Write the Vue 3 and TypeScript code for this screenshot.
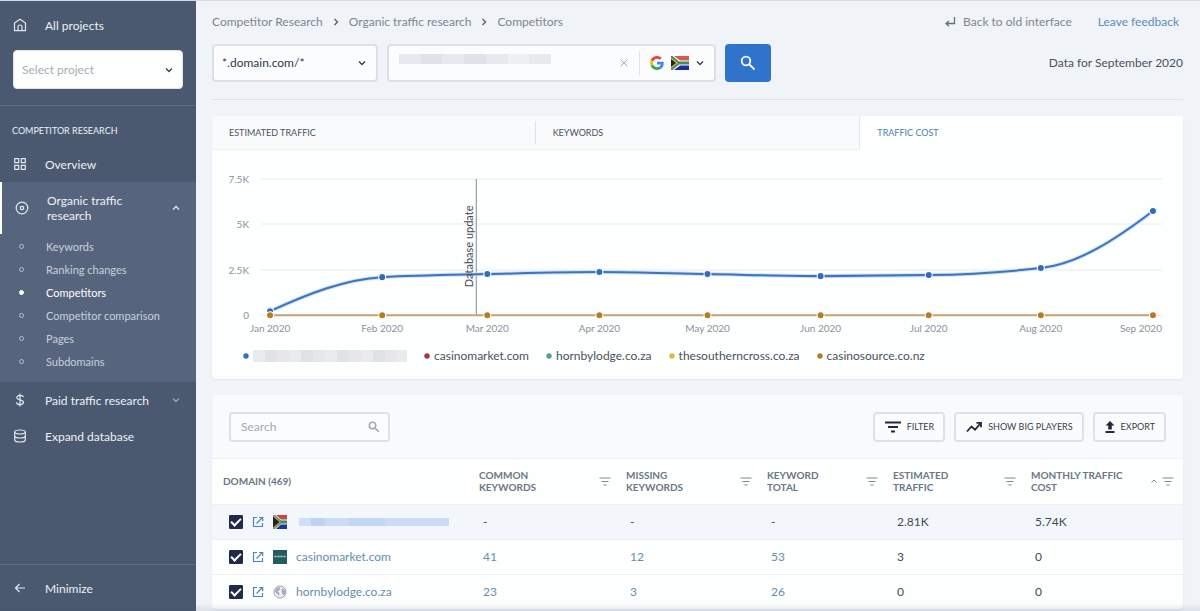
<script setup lang="ts">
import { ref } from 'vue'

interface Row {
  name: string
  icon: 'flag' | 'market' | 'globe'
  common: string
  missing: string
  total: string
  traffic: string
  cost: string
  own?: boolean
}

const subItems = ['Keywords', 'Ranking changes', 'Competitors', 'Competitor comparison', 'Pages', 'Subdomains']
const crumbs = ['Competitor Research', 'Organic traffic research', 'Competitors']
const tabs = ['Estimated traffic', 'Keywords', 'Traffic cost']
const activeTab = ref('Traffic cost')
const query = ref('')
const tableSearch = ref('')

const months = [
  { label: 'Jan 2020', x: 58, value: 230 },
  { label: 'Feb 2020', x: 170, value: 2080 },
  { label: 'Mar 2020', x: 275, value: 2270 },
  { label: 'Apr 2020', x: 387, value: 2350 },
  { label: 'May 2020', x: 495, value: 2250 },
  { label: 'Jun 2020', x: 608, value: 2160 },
  { label: 'Jul 2020', x: 716, value: 2210 },
  { label: 'Aug 2020', x: 828, value: 2570 },
  { label: 'Sep 2020', x: 940, value: 5740 },
]
const grid = [
  { label: '7.5K', value: 7500 },
  { label: '5K', value: 5000 },
  { label: '2.5K', value: 2500 },
  { label: '0', value: 0 },
]
const yOf = (value: number): number => Math.round(165 - (value / 7500) * 136)

// Smooth curve through the points that never overshoots a local peak.
function curve(points: { x: number; y: number }[]): string {
  const slopes = points.slice(1).map((p, i) => (p.y - points[i].y) / (p.x - points[i].x))
  const tangents = points.map((_, i) => {
    if (i === 0) return slopes[0] * 1.5
    if (i === points.length - 1) return slopes[i - 1] * 1.5
    const a = slopes[i - 1]
    const b = slopes[i]
    return a * b <= 0 ? 0 : (2 * a * b) / (a + b)
  })
  let d = `M${points[0].x},${points[0].y}`
  for (let i = 1; i < points.length; i++) {
    const a = points[i - 1]
    const b = points[i]
    const h = (b.x - a.x) / 3
    d += ` C${a.x + h},${a.y + tangents[i - 1] * h} ${b.x - h},${b.y - tangents[i] * h} ${b.x},${b.y}`
  }
  return d
}
const linePath = curve(months.map((m) => ({ x: m.x, y: yOf(m.value) })))

const legend = [
  { name: '', color: '#2f6fc9' },
  { name: 'casinomarket.com', color: '#b5303c' },
  { name: 'hornbylodge.co.za', color: '#55a383' },
  { name: 'thesoutherncross.co.za', color: '#dfb93f' },
  { name: 'casinosource.co.nz', color: '#bb7a22' },
]

const columns = ['Common keywords', 'Missing keywords', 'Keyword total', 'Estimated traffic', 'Monthly traffic cost']
const rows: Row[] = [
  { name: '', icon: 'flag', common: '-', missing: '-', total: '-', traffic: '2.81K', cost: '5.74K', own: true },
  { name: 'casinomarket.com', icon: 'market', common: '41', missing: '12', total: '53', traffic: '3', cost: '0' },
  { name: 'hornbylodge.co.za', icon: 'globe', common: '23', missing: '3', total: '26', traffic: '0', cost: '0' },
]
</script>

<template>
  <div class="app">
    <aside class="sidebar">
      <a href="#" class="nav home">
        <svg class="ico" viewBox="0 0 14 14"><path d="M1.500 5 7 1.300 12.500 5v7.700h-11zM5 12.500V8.500q0-1.500 2-1.500t2 1.500v4" /></svg>
        <span>All projects</span>
      </a>
      <div class="project">
        <select aria-label="Select project"><option>Select project</option></select>
        <svg class="chev" viewBox="0 0 8 8"><path d="M1 2.500 4 5.500 7 2.500" /></svg>
      </div>
      <div class="section">COMPETITOR RESEARCH</div>
      <a href="#" class="nav">
        <svg class="ico" viewBox="0 0 14 14"><path d="M1.700 1.700h4v4h-4zM8.300 1.700h4v4h-4zM1.700 8.300h4v4h-4zM8.300 8.300h4v4h-4z" /></svg>
        <span>Overview</span>
      </a>
      <div class="group">
        <a href="#" class="nav organic">
          <svg class="ico" viewBox="0 0 14 14"><circle cx="7" cy="7" r="5.800" /><circle cx="7" cy="7" r="1.700" /></svg>
          <span>Organic traffic<br />research</span>
          <svg class="chev" viewBox="0 0 8 8"><path d="M1 5.500 4 2.500 7 5.500" /></svg>
        </a>
        <ul class="subs">
          <li v-for="s in subItems" :key="s">
            <a href="#" :class="{ on: s === 'Competitors' }"><i></i>{{ s }}</a>
          </li>
        </ul>
      </div>
      <a href="#" class="nav">
        <svg class="ico" viewBox="0 0 14 14"><path d="M7 .5v13M10.300 4.200C10 2.800 8.800 2.400 7 2.400c-2 0-3.200.8-3.200 2.200C3.800 7.500 10.400 6.200 10.400 9.300c0 1.500-1.400 2.300-3.400 2.300s-3.300-.8-3.500-2.300" /></svg>
        <span>Paid traffic research</span>
        <svg class="chev dim" viewBox="0 0 8 8"><path d="M1 2.500 4 5.500 7 2.500" /></svg>
      </a>
      <a href="#" class="nav">
        <svg class="ico" viewBox="0 0 14 14"><ellipse cx="7" cy="3" rx="5.300" ry="2" /><path d="M1.700 3v8c0 1.200 2.300 2 5.300 2s5.300-.8 5.300-2V3M1.700 7c0 1.200 2.300 2 5.300 2s5.300-.8 5.300-2" /></svg>
        <span>Expand database</span>
      </a>
      <button type="button" class="nav minimize">
        <svg class="ico" viewBox="0 0 14 14"><path d="M12 7H2.500M6.500 3l-4 4 4 4" /></svg>
        <span>Minimize</span>
      </button>
    </aside>

    <main class="main">
      <header class="top">
        <nav class="crumbs" aria-label="Breadcrumb">
          <template v-for="(c, i) in crumbs" :key="c">
            <svg v-if="i" class="sep" viewBox="0 0 8 8"><path d="M2.500 1 5.500 4 2.500 7" /></svg>
            <a href="#">{{ c }}</a>
          </template>
        </nav>
        <div class="toplinks">
          <a href="#" class="back">
            <svg viewBox="0 0 12 12"><path d="M10.500 1V7.500H2.500M5 5 2 7.500l3 2.800" /></svg>
            Back to old interface
          </a>
          <a href="#" class="feedback">Leave feedback</a>
        </div>
      </header>

      <form class="query" @submit.prevent>
        <div class="scope">
          <select aria-label="Search scope"><option>*.domain.com/*</option></select>
          <svg class="chev" viewBox="0 0 8 8"><path d="M1 2.500 4 5.500 7 2.500" /></svg>
        </div>
        <div class="field">
          <input v-model="query" type="text" aria-label="Domain" />
          <div class="mask"><i></i><i></i><i></i><i></i><i></i><i></i><i></i></div>
          <button type="button" class="clear" aria-label="Clear">
            <svg viewBox="0 0 10 10"><path d="M1.500 1.500l7 7M8.500 1.500l-7 7" /></svg>
          </button>
          <button type="button" class="engine" aria-label="Search engine and country">
            <svg class="google" viewBox="0 0 48 48">
              <path fill="#ea4335" d="M24 9.500c3.540 0 6.710 1.220 9.210 3.600l6.850-6.850C35.900 2.380 30.470 0 24 0 14.620 0 6.510 5.380 2.560 13.220l7.980 6.190C12.430 13.720 17.740 9.500 24 9.500z" />
              <path fill="#4285f4" d="M46.980 24.550c0-1.570-.15-3.090-.38-4.550H24v9.020h12.940c-.58 2.960-2.260 5.480-4.780 7.180l7.730 6c4.510-4.180 7.090-10.360 7.090-17.650z" />
              <path fill="#fbbc05" d="M10.530 28.590c-.48-1.450-.76-2.990-.76-4.590s.27-3.140.76-4.590l-7.980-6.190C.92 16.460 0 20.120 0 24c0 3.880.92 7.540 2.560 10.780l7.970-6.190z" />
              <path fill="#34a853" d="M24 48c6.480 0 11.930-2.130 15.890-5.810l-7.730-6c-2.150 1.450-4.920 2.300-8.160 2.300-6.260 0-11.570-4.220-13.470-9.910l-7.980 6.190C6.510 42.620 14.620 48 24 48z" />
            </svg>
            <svg class="flag" viewBox="0 0 18 14">
              <path fill="#d95848" d="M0 0h18v5H0z" /><path fill="#1d2d9c" d="M0 9h18v5H0z" />
              <path fill="#fff" d="M0 0h3l6 4.500h9v5H9L3 14H0z" /><path fill="#3f8b63" d="M0 0h1.500L8 5.600h10v2.800H8L1.500 14H0z" />
              <path fill="#e0b64a" d="M0 1.500 7 7l-7 5.500z" /><path fill="#1e2430" d="M0 3l5 4-5 4z" />
            </svg>
            <svg class="chev" viewBox="0 0 8 8"><path d="M1 2.500 4 5.500 7 2.500" /></svg>
          </button>
        </div>
        <button type="submit" class="go" aria-label="Search">
          <svg viewBox="0 0 16 16"><circle cx="6" cy="6" r="4.300" /><path d="M9.300 9.300 14.500 14.500" /></svg>
        </button>
        <span class="date">Data for September 2020</span>
      </form>

      <section class="card">
        <div class="tabs" role="tablist">
          <button v-for="t in tabs" :key="t" type="button" role="tab" :aria-selected="t === activeTab" :class="{ on: t === activeTab }" @click="activeTab = t">{{ t }}</button>
        </div>
        <svg class="chart" viewBox="0 0 970 189" role="img" aria-label="Traffic cost by month">
          <g v-for="g in grid" :key="g.label">
            <line x1="49" x2="949" :y1="yOf(g.value)" :y2="yOf(g.value)" class="gridline" />
            <text x="37" :y="yOf(g.value) + 4" text-anchor="end" class="axis">{{ g.label }}</text>
          </g>
          <line x1="264" x2="264" y1="29" y2="165" class="update" />
          <path :d="linePath" class="glow" />
          <path :d="linePath" class="series" />
          <line x1="58" x2="940" y1="165" y2="165" class="base" />
          <text transform="translate(261 137) rotate(-90)" class="note">Database update</text>
          <g v-for="m in months" :key="m.label">
            <circle :cx="m.x" :cy="yOf(m.value)" r="3.500" class="dot" />
            <circle :cx="m.x" cy="165" r="3.500" class="dot amber" />
            <text :x="m.x === 940 ? 949 : m.x" y="182" :text-anchor="m.x === 940 ? 'end' : 'middle'" class="axis">{{ m.label }}</text>
          </g>
        </svg>
        <ul class="legend">
          <li v-for="l in legend" :key="l.color">
            <svg viewBox="0 0 6 6"><circle cx="3" cy="3" r="2.700" :fill="l.color" /></svg>
            <span v-if="l.name">{{ l.name }}</span>
            <span v-else class="redacted"></span>
          </li>
        </ul>
      </section>

      <section class="card">
        <div class="tools">
          <div class="search">
            <input v-model="tableSearch" type="text" placeholder="Search" aria-label="Search domains" />
            <svg viewBox="0 0 16 16"><circle cx="6" cy="6" r="4.300" /><path d="M9.300 9.300 14.500 14.500" /></svg>
          </div>
          <button type="button"><svg class="wide" viewBox="0 0 16 12"><path d="M0 1.500h16M3 6h10M6 10.500h4" /></svg>FILTER</button>
          <button type="button">
            <svg class="wide" viewBox="0 0 16 12"><path d="M1 10.500 5.500 5.500l3.500 3.200L14 3M10.500 1.800h4.500v4.400" /></svg>SHOW BIG PLAYERS
          </button>
          <button type="button" class="export"><svg viewBox="0 0 10 12"><path class="solid" d="M5 0l4.500 4.500H6.800V8.500H3.200V4.500H.5z" /><path d="M.5 11h9" /></svg>EXPORT</button>
        </div>
        <table>
          <colgroup><col class="c0" /><col class="c1" /><col class="c2" /><col class="c3" /><col class="c4" /><col class="c5" /></colgroup>
          <thead>
            <tr>
              <th scope="col" class="first">DOMAIN (469)</th>
              <th v-for="c in columns" :key="c" scope="col">
                <div class="head">
                  <span>{{ c }}</span>
                  <svg v-if="c === 'Monthly traffic cost'" class="sort" viewBox="0 0 8 8"><path d="M1.500 5.500 4 3 6.500 5.500" /></svg>
                  <svg class="filt" viewBox="0 0 12 9"><path d="M.5 1h11M2.500 4.500h7M4.500 8h3" /></svg>
                </div>
              </th>
            </tr>
          </thead>
          <tbody>
            <tr v-for="r in rows" :key="r.icon" :class="{ own: r.own }">
              <td class="first">
                <div class="domain">
                  <input type="checkbox" checked :aria-label="'Show ' + (r.name || 'own domain')" />
                  <svg class="open" viewBox="0 0 12 12"><path d="M5 1.500H1.500v9h9V7M7 1.500h3.700v3.700M10.500 1.500 4.500 7.500" /></svg>
                  <svg v-if="r.icon === 'flag'" class="fav" viewBox="0 0 14 14">
                    <path fill="#c8483f" d="M0 0h14v5H0z" /><path fill="#1f3592" d="M0 9h14v5H0z" />
                    <path fill="#e9eef0" d="M0 0h3l5 4.500h6v5H8L3 14H0z" /><path fill="#3b8a68" d="M0 0h1.500L8 5.600h6v2.800H8L1.500 14H0z" />
                    <path fill="#d8a94a" d="M0 0 8 7 0 14z" /><path fill="#1e2430" d="M0 1.500 6.500 7 0 12.500z" />
                  </svg>
                  <svg v-else-if="r.icon === 'market'" class="fav" viewBox="0 0 14 14">
                    <path fill="#265c61" d="M0 0h14v14H0z" /><path stroke="#c3d6d5" stroke-width="1.500" stroke-dasharray="2 1" d="M1.500 6.500h11" />
                  </svg>
                  <svg v-else class="fav" viewBox="0 0 14 14">
                    <circle cx="7" cy="7" r="6" fill="#f2f2f7" stroke="#9c9bb2" />
                    <path fill="#aaa8c0" d="M3 3.500 6 2l1.500 1.500L6 5.500 4.500 6.500 6.500 8l-.500 3-1.500-1.500L2 6.500zM9 3l2.500 1.500L12.500 8l-2 2.500L9 8.500 8.500 6z" />
                  </svg>
                  <a v-if="r.name" href="#">{{ r.name }}</a>
                  <span v-else class="hidden-name"></span>
                </div>
              </td>
              <td v-for="(v, i) in [r.common, r.missing, r.total]" :key="i"><a v-if="!r.own" href="#">{{ v }}</a><template v-else>{{ v }}</template></td>
              <td>{{ r.traffic }}</td>
              <td>{{ r.cost }}</td>
            </tr>
          </tbody>
        </table>
      </section>
    </main>
  </div>
</template>

<style>
body {
  margin: 0;
  background: #f0f3f8;
}
</style>

<style scoped>
* {
  box-sizing: border-box;
}
.app {
  position: relative;
  display: flex;
  height: 100vh;
  overflow: hidden;
  font-family: Lato, "Liberation Sans", sans-serif;
  font-size: 12px;
  color: #4a5260;
  border-top: 1px solid #d5dae3;
}
.app::after {
  content: "";
  position: absolute;
  left: 0;
  right: 0;
  bottom: 0;
  height: 8px;
  background: linear-gradient(rgba(70, 80, 100, 0), rgba(70, 80, 100, 0.12));
  pointer-events: none;
}
a {
  color: inherit;
  text-decoration: none;
}
button,
input,
select {
  font: inherit;
  color: inherit;
}
button {
  cursor: pointer;
}
svg {
  flex: none;
  fill: none;
}
ul {
  list-style: none;
  margin: 0;
  padding: 0;
}
.chev {
  width: 8px;
  height: 8px;
  stroke: #39404e;
  stroke-width: 1.400;
}

.sidebar {
  flex: none;
  width: 196px;
  display: flex;
  flex-direction: column;
  background: #4a5870;
  color: #eef1f5;
  padding-top: 6px;
}
.nav {
  display: flex;
  align-items: center;
  height: 36px;
  padding: 0 16px 0 13px;
  gap: 18px;
}
.nav span {
  flex: 1;
  text-align: left;
}
.ico {
  width: 14px;
  height: 14px;
  stroke: #e3e8ee;
  stroke-width: 1.200;
}
.nav .chev {
  stroke: #dde2ea;
}
.nav .chev.dim {
  stroke: #97a3b5;
}
.project {
  position: relative;
  padding: 7px 13px 16px;
  border-bottom: 1px solid #5f6d84;
}
.project select {
  display: block;
  width: 100%;
  height: 39px;
  appearance: none;
  border: 1px solid #dfe4ea;
  border-radius: 4px;
  background: #fdfefe;
  color: #a9aeb6;
  padding: 0 8px;
}
.project .chev {
  position: absolute;
  right: 23px;
  top: 23px;
}
.section {
  padding: 18px 12px 8px;
  line-height: 14px;
  font-size: 9px;
}
.group {
  background: #56657d;
  padding-bottom: 8px;
}
.organic {
  height: 52px;
  border-left: 2px solid #fff;
  line-height: 15px;
}
.subs li {
  height: 23px;
}
.subs {
  padding: 1px 0;
  font-size: 11px;
  line-height: 23px;
  color: #c9d0db;
}
.subs a {
  display: flex;
  align-items: center;
  padding-left: 19px;
  gap: 22px;
}
.subs i {
  width: 5px;
  height: 5px;
  border: 1px solid #b9c2cf;
  border-radius: 50%;
}
.subs .on {
  color: #fff;
}
.subs .on i {
  background: #fff;
  border-color: #fff;
}
.minimize {
  margin-top: auto;
  height: 47px;
  border: 0;
  border-top: 1px solid #5f6d84;
  background: none;
}

.main {
  flex: 1;
  min-width: 0;
  padding: 0 17px 0 16px;
}
.top {
  display: flex;
  justify-content: space-between;
  align-items: center;
  height: 41px;
  color: #7d8692;
}
.crumbs,
.toplinks,
.back {
  display: flex;
  align-items: center;
}
.crumbs {
  gap: 9px;
}
.sep {
  width: 8px;
  height: 8px;
  stroke: #59616e;
  stroke-width: 1.400;
}
.toplinks {
  gap: 26px;
  padding-right: 4px;
}
.back {
  gap: 7px;
}
.back svg {
  width: 12px;
  height: 12px;
  stroke: #66707e;
  stroke-width: 1.300;
}
.feedback {
  color: #5c8cb4;
}
.query {
  display: flex;
  align-items: center;
  gap: 9px;
  height: 57px;
  padding-bottom: 17px;
  border-bottom: 1px solid #dce1e9;
  margin: 1px 0 16px;
}
.scope {
  position: relative;
  width: 166px;
}
.scope select {
  display: block;
  width: 100%;
  height: 38px;
  appearance: none;
  border: 2px solid #dbdfe8;
  border-radius: 4px;
  background: #fbfcfe;
  padding: 0 8px;
  color: #31384a;
}
.scope .chev {
  position: absolute;
  right: 12px;
  top: 15px;
}
.field {
  position: relative;
  display: flex;
  align-items: center;
  width: 329px;
  height: 38px;
  border: 2px solid #dbdfe8;
  border-radius: 4px;
  background: #fbfcfe;
}
.field input {
  flex: 1;
  min-width: 0;
  height: 100%;
  border: 0;
  background: none;
  padding: 0 10px;
}
.mask {
  position: absolute;
  left: 10px;
  top: 8px;
  width: 152px;
  height: 10px;
  display: flex;
}
.mask i {
  flex: 1;
  background: #e8e9ee;
}
.mask i:nth-child(even) {
  background: #e1e2e8;
}
.mask i:nth-child(6) {
  background: #eff0f4;
}
.clear {
  border: 0;
  background: none;
  padding: 0 10px;
}
.clear svg {
  display: block;
  width: 10px;
  height: 10px;
  stroke: #a4abb5;
}
.engine {
  display: flex;
  align-items: center;
  gap: 7px;
  height: 24px;
  border: 0;
  border-left: 1px solid #dfe3ea;
  background: none;
  padding: 0 10px;
}
.google {
  width: 14px;
  height: 14px;
}
.flag {
  width: 18px;
  height: 14px;
}
.go {
  width: 46px;
  height: 38px;
  border: 0;
  border-radius: 4px;
  background: #3073cb;
  padding: 0;
}
.go svg {
  display: block;
  margin: auto;
  width: 16px;
  height: 16px;
  stroke: #fff;
  stroke-width: 1.800;
}
.date {
  margin-left: auto;
}

.card {
  background: #fdfefe;
  border-radius: 4px;
  box-shadow: 0 1px 2px #e3e7ee;
  margin-bottom: 16px;
  overflow: hidden;
}
.tabs {
  display: grid;
  grid-template-columns: repeat(3, 1fr);
}
.tabs button {
  position: relative;
  height: 34px;
  border: 0;
  border-bottom: 1px solid #edf0f4;
  background: #f9fafc;
  text-align: left;
  text-transform: uppercase;
  font-size: 9px;
  padding: 0 17px;
}
.tabs button:first-child::after {
  content: "";
  position: absolute;
  right: 0;
  top: 5px;
  bottom: 5px;
  border-right: 1px solid #dde1e8;
}
.tabs .on {
  background: #fdfefe;
  border-left: 1px solid #e3e7ed;
  border-bottom-color: #fdfefe;
  color: #4c80ac;
}
.chart {
  display: block;
  width: 100%;
}
.gridline {
  stroke: #e8ebef;
}
.axis {
  fill: #8b929d;
  font-size: 10px;
}
.note {
  fill: #444b57;
  font-size: 11px;
}
.update {
  stroke: #85898f;
}
.glow {
  stroke: #cfdff5;
  stroke-width: 4;
}
.series {
  stroke: #3c74bd;
  stroke-width: 2;
}
.base {
  stroke: #c6a273;
  stroke-width: 2;
}
.dot {
  fill: #2f6dc4;
  stroke: #fff;
}
.dot.amber {
  fill: #bb7a22;
}
.legend {
  display: flex;
  gap: 17px;
  padding: 7px 31px 13px;
  line-height: 20px;
}
.legend li {
  display: flex;
  align-items: center;
  gap: 4px;
}
.legend svg {
  width: 6px;
  height: 6px;
}
.redacted {
  width: 154px;
  height: 12px;
  background: repeating-linear-gradient(90deg, #eaebef 0 12px, #e1e2e8 12px 24px, #e6e6eb 24px 36px);
}

.tools {
  display: flex;
  align-items: center;
  gap: 9px;
  height: 64px;
  padding: 0 17px;
  background: #f9fafc;
  border-bottom: 1px solid #edf0f5;
}
.search {
  position: relative;
  width: 161px;
  margin-right: auto;
}
.search input {
  display: block;
  width: 100%;
  height: 30px;
  border: 2px solid #dfe1e9;
  border-radius: 4px;
  background: #fbfcfd;
  padding: 0 30px 0 10px;
}
.search input::placeholder {
  color: #a3a8b2;
}
.search svg {
  position: absolute;
  right: 10px;
  top: 9px;
  width: 12px;
  height: 12px;
  stroke: #a3a8b2;
  stroke-width: 2;
}
.tools button {
  display: flex;
  align-items: center;
  gap: 6px;
  height: 30px;
  border: 2px solid #dfe1ea;
  border-radius: 4px;
  background: #fafbfd;
  padding: 0 9px 0 10px;
  font-size: 9px;
  color: #383e52;
}
.tools button svg {
  width: 10px;
  height: 12px;
  stroke: #23283f;
  stroke-width: 1.800;
}
.tools button svg.wide {
  width: 16px;
}
.tools .solid {
  fill: #23283f;
  stroke: none;
}

table {
  width: 100%;
  table-layout: fixed;
  border-collapse: collapse;
}
.c0 {
  width: 255px;
}
.c1 {
  width: 147px;
}
.c2 {
  width: 141px;
}
.c3 {
  width: 126px;
}
.c4 {
  width: 138px;
}
.c5 {
  width: 164px;
}
th {
  height: 45px;
  padding: 0 3px 0 12px;
  text-align: left;
  font-size: 10px;
  line-height: 12px;
  font-weight: 700;
  color: #6c7785;
}
th.first {
  padding-left: 11px;
}
th:last-child {
  padding-right: 9px;
}
.head {
  display: flex;
  align-items: center;
  gap: 4px;
  text-transform: uppercase;
}
.head span {
  flex: 1;
}
th:not(:last-child) .head span {
  padding-right: 24px;
}
.filt {
  width: 12px;
  height: 9px;
  stroke: #7f8894;
}
.sort {
  width: 8px;
  height: 8px;
  stroke: #7f8894;
}
td {
  height: 35px;
  padding: 0 16px;
  border-top: 1px solid #eceff4;
  color: #434a56;
}
td.first {
  padding-left: 17px;
}
td a {
  color: #658fac;
}
.own td {
  background: #f3f7fc;
}
.domain {
  display: flex;
  align-items: center;
  gap: 9px;
}
.domain input {
  appearance: none;
  flex: none;
  width: 14px;
  height: 14px;
  margin: 0;
  border: 1px solid #232a48;
  border-radius: 1px;
  display: grid;
  place-items: center;
}
.domain input:checked {
  background: #232a48;
}
.domain input:checked::after {
  content: "";
  width: 8px;
  height: 4px;
  border: solid #fff;
  border-width: 0 0 2px 2px;
  transform: translateY(-1px) rotate(-45deg);
}
.open {
  width: 12px;
  height: 12px;
  stroke: #4d88b8;
  stroke-width: 1.200;
}
.fav {
  width: 14px;
  height: 14px;
}
.hidden-name {
  width: 150px;
  height: 8px;
  margin-left: 3px;
  background: linear-gradient(90deg, #cfdff5 0 12px, #bed3f1 12px 26px, #cbdcf5 26px 50px, #c3d7f3 50px 86px, #cbdcf5 86px);
}
</style>
